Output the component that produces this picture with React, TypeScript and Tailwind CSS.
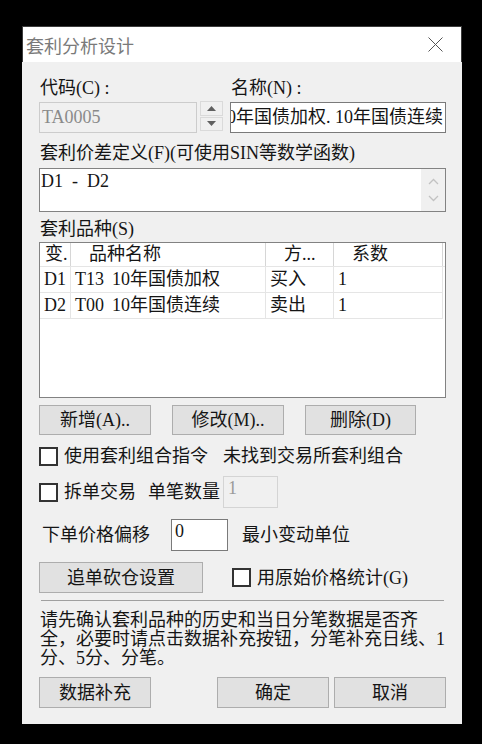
import React from "react";

const font = "font-['Liberation_Serif','Noto_Sans_CJK_SC',serif]";

function Button({ className, children }: { className: string; children: React.ReactNode }) {
  return (
    <div className={`flex items-center justify-center bg-[#e1e1e1] border border-[#adadad] text-[18px] leading-[22px] ${className}`}>
      {children}
    </div>
  );
}

function Checkbox() {
  return <span className="block w-[19px] h-[19px] border-2 border-[#333] bg-white shrink-0" />;
}

const rows = [
  { v: "D1", code: "T13", name: "10年国债加权", dir: "买入", k: "1" },
  { v: "D2", code: "T00", name: "10年国债连续", dir: "卖出", k: "1" },
];

export default function App() {
  return (
    <div className={`w-[482px] h-[744px] bg-black pt-[26px] pl-[22px] text-[#151515] ${font}`}>
      <div className="w-[440px] flex flex-col">
        {/* title bar */}
        <div className="h-[36px] bg-white border-t border-x border-[#3c3c3c] flex items-center justify-between pl-[3px] pr-[18px]">
          <span className="font-['Noto_Sans_CJK_SC',sans-serif] text-[18px] leading-[22px] text-[#7a7a7a]">套利分析设计</span>
          <svg width="15" height="15" viewBox="0 0 15 15">
            <path d="M0.5 0.5 L14.5 14.5 M14.5 0.5 L0.5 14.5" stroke="#555" strokeWidth="1" />
          </svg>
        </div>

        <div className="h-[662px] bg-[#f0f0f0] pl-[17px] pr-[16px] pt-[15px] text-[18px]">
          <div className="flex h-[22px] leading-[22px]">
            <span className="ml-[1px] w-[191px] whitespace-pre">代码(C) :</span>
            <span className="whitespace-pre">名称(N) :</span>
          </div>

          <div className="flex mt-[3px] h-[31px]">
            <div className="w-[158px] h-[31px] border border-[#cccccc] bg-[#f0f0f0] pl-[2px] leading-[28px] text-[#8a8a8a]">
              TA0005
            </div>
            <div className="ml-[3px] w-[23px] h-[30px] -mt-[1px] flex flex-col gap-[1px]">
              <div className="flex-1 border border-[#dadada] bg-[#f0f0f0] flex items-center justify-center">
                <svg width="9" height="5" viewBox="0 0 9 5">
                  <path d="M0 5 L4.5 0 L9 5Z" fill="#606060" />
                </svg>
              </div>
              <div className="flex-1 border border-[#dadada] bg-[#f0f0f0] flex items-center justify-center">
                <svg width="9" height="5" viewBox="0 0 9 5">
                  <path d="M0 0 L4.5 5 L9 0Z" fill="#606060" />
                </svg>
              </div>
            </div>
            <div className="ml-[7px] w-[216px] h-[31px] border border-[#7a7a7a] bg-white overflow-hidden flex justify-end pr-[2px]">
              <span className="whitespace-nowrap leading-[28px]">10年国债加权. 10年国债连续</span>
            </div>
          </div>

          <div className="mt-[9px] h-[22px] leading-[22px] ml-[1px]">套利价差定义(F)(可使用SIN等数学函数)</div>

          <div className="mt-[4px] h-[44px] border border-[#828282] bg-white flex">
            <div className="flex-1 pl-[1px] pt-[1px] leading-[22px] whitespace-pre">D1  -  D2</div>
            <div className="w-[24px] bg-[#f0f0f0] flex flex-col items-center justify-between py-[9px]">
              <svg width="11" height="7" viewBox="0 0 11 7">
                <path d="M1 6 L5.5 1.5 L10 6" stroke="#c2c2c2" fill="none" strokeWidth="1.3" />
              </svg>
              <svg width="11" height="7" viewBox="0 0 11 7">
                <path d="M1 1 L5.5 5.5 L10 1" stroke="#c2c2c2" fill="none" strokeWidth="1.3" />
              </svg>
            </div>
          </div>

          <div className="mt-[6px] h-[22px] leading-[22px] ml-[1px]">套利品种(S)</div>

          <div className="mt-[2px] h-[156px] border border-[#828282] bg-white">
            <div className="flex h-[24px] border-b border-[#e5e5e5] leading-[23px]">
              <div className="w-[31px] border-r border-[#d6d6d6] pl-[5px]">变.</div>
              <div className="w-[195px] border-r border-[#d6d6d6] pl-[18px]">品种名称</div>
              <div className="w-[68px] border-r border-[#d6d6d6] pl-[18px]">方...</div>
              <div className="w-[109px] border-r border-[#d6d6d6] pl-[18px]">系数</div>
            </div>
            {rows.map((r) => (
              <div key={r.v} className="flex h-[26px] leading-[25px]">
                <div className="w-[31px] border-r border-b border-[#e5e5e5] pl-[4px]">{r.v}</div>
                <div className="w-[195px] border-r border-b border-[#e5e5e5] pl-[4px] whitespace-nowrap flex">
                  <span className="w-[37px]">{r.code}</span>
                  <span>{r.name}</span>
                </div>
                <div className="w-[68px] border-r border-b border-[#e5e5e5] pl-[4px]">{r.dir}</div>
                <div className="w-[109px] border-r border-b border-[#e5e5e5] pl-[4px]">{r.k}</div>
              </div>
            ))}
          </div>

          <div className="mt-[7px] flex gap-[21px]">
            <Button className="w-[112px] h-[30px]">新增(A)..</Button>
            <Button className="w-[112px] h-[30px]">修改(M)..</Button>
            <Button className="w-[111px] h-[30px]">删除(D)</Button>
          </div>

          <div className="mt-[10px] h-[22px] flex items-center leading-[22px]">
            <Checkbox />
            <span className="ml-[6px]">使用套利组合指令</span>
            <span className="ml-[15px]">未找到交易所套利组合</span>
          </div>

          <div className="mt-[9px] h-[32px] flex items-center leading-[22px]">
            <Checkbox />
            <span className="ml-[6px]">拆单交易</span>
            <span className="ml-[12px]">单笔数量</span>
            <div className="ml-[3px] w-[55px] h-[32px] border border-[#d4d4d4] bg-[#f0f0f0] pl-[4px] leading-[22px] text-[#9a9a9a]">
              1
            </div>
          </div>

          <div className="mt-[11px] h-[32px] flex items-center leading-[22px]">
            <span className="ml-[3px]">下单价格偏移</span>
            <div className="ml-[21px] w-[57px] h-[32px] border border-[#7a7a7a] bg-white pl-[3px] leading-[22px] self-start">
              0
            </div>
            <span className="ml-[14px]">最小变动单位</span>
          </div>

          <div className="mt-[11px] h-[31px] flex items-center">
            <Button className="w-[164px] h-[31px]">追单砍仓设置</Button>
            <span className="ml-[29px]">
              <Checkbox />
            </span>
            <span className="ml-[6px] leading-[22px]">用原始价格统计(G)</span>
          </div>

          <div className="mt-[7px] h-px bg-[#a0a0a0] ml-[2px] mr-[2px]" />

          <p className="mt-[10px] leading-[19px] ml-[1px] whitespace-nowrap">
            请先确认套利品种的历史和当日分笔数据是否齐
            <br />
            全，必要时请点击数据补充按钮，分笔补充日线、1
            <br />
            分、5分、分笔。
          </p>

          <div className="mt-[9px] flex">
            <Button className="w-[112px] h-[31px]">数据补充</Button>
            <Button className="ml-[66px] w-[112px] h-[31px]">确定</Button>
            <Button className="ml-[5px] w-[112px] h-[31px]">取消</Button>
          </div>
        </div>
      </div>
    </div>
  );
}
